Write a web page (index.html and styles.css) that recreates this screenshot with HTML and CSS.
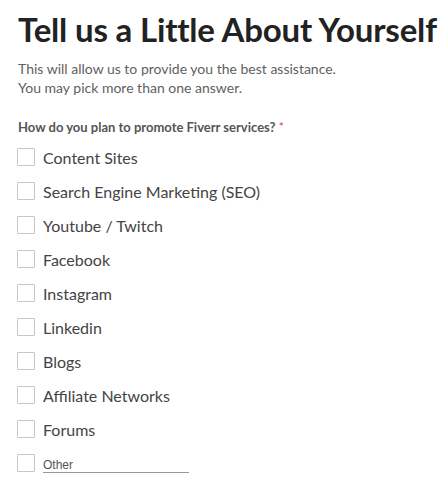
FILE: index.html
```html
<!DOCTYPE html>
<html>
<head>
<meta charset="utf-8">
<link rel="stylesheet" href="styles.css">
</head>
<body>
<div class="page">
  <h1 class="title">Tell us a Little About Yourself</h1>
  <p class="intro">This will allow us to provide you the best assistance.<br>You may pick more than one answer.</p>
  <div class="question">How do you plan to promote Fiverr services? <span class="req">*</span></div>
  <ul class="options">
    <li class="option"><span class="box"></span><span class="label">Content Sites</span></li>
    <li class="option"><span class="box"></span><span class="label">Search Engine Marketing (SEO)</span></li>
    <li class="option"><span class="box"></span><span class="label">Youtube / Twitch</span></li>
    <li class="option"><span class="box"></span><span class="label">Facebook</span></li>
    <li class="option"><span class="box"></span><span class="label">Instagram</span></li>
    <li class="option"><span class="box"></span><span class="label">Linkedin</span></li>
    <li class="option"><span class="box"></span><span class="label">Blogs</span></li>
    <li class="option"><span class="box"></span><span class="label">Affiliate Networks</span></li>
    <li class="option"><span class="box"></span><span class="label">Forums</span></li>
    <li class="option other"><span class="box"></span><input class="other-input" type="text" placeholder="Other"></li>
  </ul>
</div>
</body>
</html>
```
FILE: styles.css
```css
html, body {
  margin: 0;
  padding: 0;
  background: #fff;
}
.page {
  padding: 9px 0 0 18px;
  font-family: Lato, "Open Sans", sans-serif;
}
.title {
  margin: 0;
  font-size: 33px;
  line-height: 40px;
  font-weight: 700;
  color: #222;
  letter-spacing: -0.18px;
}
.intro {
  margin: 10px 0 0;
  font-size: 14px;
  line-height: 19px;
  color: #5f5f5f;
}
.question {
  margin-top: 22px;
  font-size: 13px;
  font-weight: 700;
  color: #555;
  line-height: 16px;
}
.req {
  color: #e0393e;
  font-weight: 400;
  vertical-align: top;
  font-size: 12px;
}
.options {
  list-style: none;
  margin: 5px 0 0;
  padding: 0;
}
.option {
  display: flex;
  align-items: center;
  height: 34px;
}
.box {
  width: 16px;
  height: 16px;
  border: 1px solid #c6c6c6;
  border-radius: 1px;
  box-sizing: content-box;
  flex: none;
  margin-left: -1px;
}
.label {
  margin-left: 8px;
  font-size: 16px;
  color: #444;
}
.other-input {
  margin-left: 8px;
  width: 146px;
  border: 0;
  border-bottom: 1px solid #999;
  padding: 5px 0 0;
  font-family: "Liberation Sans", Arial, sans-serif;
  font-size: 12px;
  line-height: 14px;
  outline: none;
  background: transparent;
}
.other-input::placeholder {
  color: #555;
}
```
